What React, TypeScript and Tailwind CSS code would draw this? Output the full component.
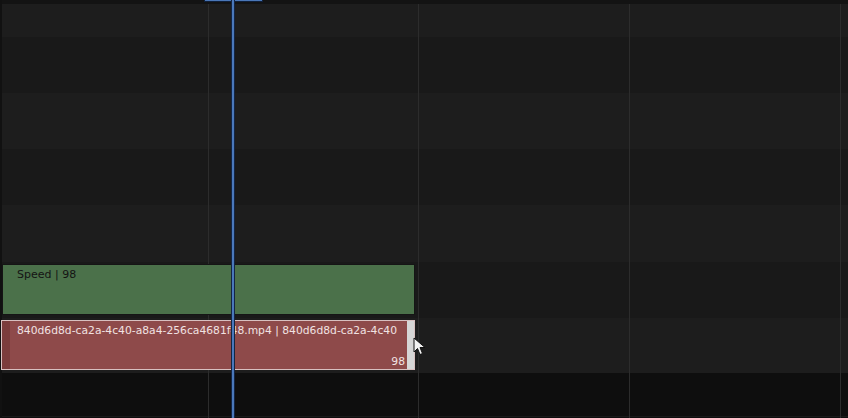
const ROWS: { h: string; bg: string }[] = [
  { h: "h-[33px]", bg: "bg-[#1d1d1d]" },
  { h: "h-[56px]", bg: "bg-[#191919]" },
  { h: "h-[56px]", bg: "bg-[#1d1d1d]" },
  { h: "h-[56px]", bg: "bg-[#191919]" },
  { h: "h-[57px]", bg: "bg-[#1d1d1d]" },
];

const GRID_X = [208, 418, 629, 840];

function Cursor() {
  return (
    <svg
      width="14"
      height="20"
      viewBox="0 0 14 20"
      className="absolute z-30 left-[413px] top-[337px]"
      aria-hidden="true"
    >
      <path
        d="M1 1 L1 15 L4.5 11.5 L7 17.5 L9.5 16.5 L7 10.5 L12 10.5 Z"
        fill="#f2f2f2"
        stroke="#111"
        strokeWidth="1"
        strokeLinejoin="round"
      />
    </svg>
  );
}

export default function App() {
  return (
    <div
      className="relative w-[848px] h-[418px] overflow-hidden bg-[#0e0e0e]"
      style={{ fontFamily: '"DejaVu Sans", sans-serif' }}
    >
      <div className="flex flex-col pl-[2px]">
        <div className="h-[4px] bg-[#131313]" />
        {ROWS.map((r, i) => (
          <div key={i} className={`${r.h} ${r.bg}`} />
        ))}

        {/* effect strip channel */}
        <div className="h-[56px] bg-[#191919] pt-[2px]">
          <div className="relative z-10 w-[413px] h-[51px] bg-[#4b714a] border border-[#151515] pl-[14px] pt-[3px] text-[11px] leading-[14px] text-[#141414]">
            Speed | 98
          </div>
        </div>

        {/* movie strip channel */}
        <div className="h-[55px] bg-[#1d1d1d] pt-[2px] -ml-[1px]">
          <div className="relative z-10 flex w-[414px] h-[50px] border border-[#d8c0c0] bg-[#8e4a4a]">
            <div className="w-[8px] bg-[#7b3c3c]" />
            <div className="flex-1 flex flex-col justify-between pl-[7px] pr-[2px] pt-[3px] text-[10.75px] leading-[14px] text-[#f1e2e2] whitespace-nowrap overflow-hidden">
              <span>840d6d8d-ca2a-4c40-a8a4-256ca4681f48.mp4 | 840d6d8d-ca2a-4c40</span>
              <span className="self-end">98</span>
            </div>
            <div className="w-[7px] bg-[#d6d6d6]" />
          </div>
        </div>

        <div className="h-[44px] bg-[#0e0e0e] border-b border-[#1a1a1a]" />
      </div>

      {/* left edge */}
      <div className="absolute left-0 top-0 h-full w-[2px] bg-[#111111]" />

      {/* vertical grid lines */}
      {GRID_X.map((x) => (
        <div
          key={x}
          className="absolute top-[4px] bottom-0 w-px bg-[#2c2c2c]"
          style={{ left: x }}
        />
      ))}

      {/* playhead */}
      <div className="absolute z-20 left-[204px] top-[-2px] w-[59px] h-[4px] bg-[#4a77b8] border border-[#10203a]" />
      <div className="absolute z-20 left-[231px] top-0 bottom-0 w-[4px] bg-[#132544] flex justify-center">
        <div className="w-[2px] h-full bg-[#4a78bb]" />
      </div>

      <Cursor />
    </div>
  );
}
